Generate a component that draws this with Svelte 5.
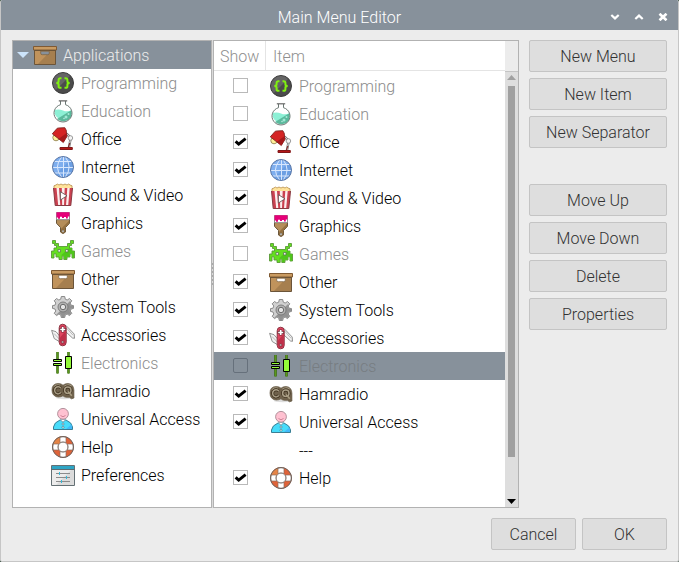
<script>
  const categories = [
    { name: 'Programming', icon: 'code', off: true },
    { name: 'Education', icon: 'flask', off: true },
    { name: 'Office', icon: 'lamp' },
    { name: 'Internet', icon: 'globe' },
    { name: 'Sound & Video', icon: 'popcorn' },
    { name: 'Graphics', icon: 'brush' },
    { name: 'Games', icon: 'invader', off: true },
    { name: 'Other', icon: 'box' },
    { name: 'System Tools', icon: 'gear' },
    { name: 'Accessories', icon: 'knife' },
    { name: 'Electronics', icon: 'parts', off: true },
    { name: 'Hamradio', icon: 'radio' },
    { name: 'Universal Access', icon: 'person' },
  ];
  const help = { name: 'Help', icon: 'buoy' };
  const tree = [...categories, help, { name: 'Preferences', icon: 'prefs' }];
  let items = $state([...categories, { name: '---', separator: true }, help].map((c) => ({ ...c })));
  let selected = $state('Electronics');
  const actions = [
    ['New Menu', 'New Item', 'New Separator'],
    ['Move Up', 'Move Down', 'Delete', 'Properties'],
  ];
</script>

{#snippet icon(name)}
  <svg class="icon" viewBox="0 0 24 24" width="24" height="24" aria-hidden="true">
    {#if name === 'code'}
      <circle cx="12" cy="12" r="10.5" fill="#4b4b4b" stroke="#3c3c3c" />
      <path d="M4.9 4.9A10 10 0 0 1 19 4.9L4.9 19A10 10 0 0 1 4.9 4.9Z" fill="#656565" />
      <path d="M10.5 7.2H9.4Q7.6 7.2 7.6 8.8V10.3Q7.6 12 5.3 12Q7.6 12 7.6 13.7V15.2Q7.6 16.8 9.4 16.8H10.5M13.5 7.2H14.6Q16.4 7.2 16.4 8.8V10.3Q16.4 12 18.7 12Q16.4 12 16.4 13.7V15.2Q16.4 16.8 14.6 16.8H13.5" fill="none" stroke="#80f010" stroke-width="2" />
    {:else if name === 'flask'}
      <path d="M9.5 2V5.7A9 8.8 0 1 0 14.5 5.7V2Z" fill="#fff" />
      <path d="M3.6 11Q8 9.7 12 11.5T20.4 11.3A8.5 8.5 0 1 1 3.6 11Z" fill="#8cf0d5" />
      <path d="M20.3 11.2Q22 17 17.5 20.8Q12 24 6 20Z" fill="#5ab99c" />
      <path d="M9.5 2V5.7A9 8.8 0 1 0 14.5 5.7V2" fill="none" stroke="#6b7773" />
      <path d="M7.8 1.8H16.2" stroke="#666" stroke-width="1.2" />
      <circle cx="15" cy="18" r="1.5" fill="#9fe9d5" /><circle cx="17.5" cy="15" r="1" fill="#a8ebd9" /><circle cx="13" cy="19.5" r=".7" fill="#c7f2e7" />
    {:else if name === 'lamp'}
      <circle cx="5" cy="10.6" r="3.2" fill="#fff09a" stroke="#a09260" />
      <path d="M15.5 6.5L19.8 11L17.8 21" fill="none" stroke="#777" stroke-width="2.4" />
      <path d="M15.5 6.5L19.8 11L17.8 21" fill="none" stroke="#ddd" />
      <circle cx="19.4" cy="11" r="2.3" fill="#f4f4f4" stroke="#888" stroke-width=".8" />
      <path d="M6.3 1.2L9 .9L13.8 .7L15.2 3.2L15.9 9.5L12.3 15.5L1.3 6.8Z" fill="#d42424" stroke="#7d2320" stroke-width=".9" />
      <path d="M15.7 6L15.7 9.5L12.3 15.2L7.8 11.7Z" fill="#a5191b" />
      <path d="M9 20.5H21.3V22.5H9ZM17.5 20L18.8 16" fill="#b51718" stroke="#811818" />
    {:else if name === 'globe'}
      <circle cx="12" cy="12" r="10.5" fill="#7eaeee" />
      <path d="M19 5L5 19Q9 23 14 22Q24 19 22 10Q21 6 19 5Z" fill="#6c9fe3" />
      <path d="M3 6.5H21M1.5 12.5H22.5M3.5 18H20.5M12.5 1.5V22.5M11 1.5Q1.8 12 11 22.5M14 1.5Q22.2 12 14 22.5" fill="none" stroke="#d8e7fd" stroke-width="1" />
      <circle cx="12" cy="12" r="10.5" fill="none" stroke="#5b77a5" />
    {:else if name === 'popcorn'}
      <path d="M3 5Q2 2 5 2Q6 0 8 2Q10 0 12 2Q14 0 16 2Q18 0 19 2Q22 2 21 5V7H3Z" fill="#ffe39a" stroke="#b58e50" stroke-width=".8" />
      <path d="M2.5 5H21.5L19.8 22.5H4.2Z" fill="#fbeeee" />
      <path d="M2.5 5H5.5L7.2 22.5H4.2ZM8 5H10.8L11.2 22.5H9.3ZM13.7 5H16.3L15 22.5H13ZM18.7 5H21.5L19.8 22.5H17.2Z" fill="#cb4150" />
      <path d="M2.5 5L4.2 22.5H19.8L21.5 5" fill="none" stroke="#873b43" />
      <path d="M9.4 8.7V17L16 12.8Z" fill="#fff" stroke="#655" stroke-width=".9" />
    {:else if name === 'brush'}
      <path d="M5.5 8.5V12.3L9.5 16.5V21Q12 24 14.5 21V16.5L18.5 12.3V8.5Z" fill="#b58e5a" stroke="#6b563a" />
      <path d="M14.2 16.3L18.2 12.2V9.5L10 18V21Q12 23.3 14.2 21Z" fill="#94703f" />
      <path d="M5.5 1.5H18.5V8.7H5.5Z" fill="#fff" stroke="#777" stroke-width=".8" />
      <path d="M5.5 1.3H18.5V5.5H16.8V7.5H15V6H13V7H11V5.8H9V7.7H7V6.5H5.5Z" fill="#e60078" />
      <circle cx="12" cy="20.2" r="1.1" fill="#fff" stroke="#615b50" stroke-width=".7" />
    {:else if name === 'invader'}
      <path d="M1.5 1.5H4.5V4.5H7.5V7.5H16.5V4.5H19.5V1.5H22.5V4.5H20.5V6.5H18.5V9H21V12H23.5V19H21V14.8H19V18H16V20.5H12.8V17H11.2V20.5H8V18H5V14.8H3V19H.5V12H3V9H5.5V6.5H3.5V4.5H1.5Z" fill="#64df20" stroke="#5a9838" stroke-width=".9" />
      <path d="M18.2 9H21V12H23V18.5H21.4V14.5H18.5V17.6H15.5V20H13.3V16.6H9.8Z" fill="#4fc51b" />
      <path d="M7 10.5H9.5V13H7ZM14.5 10.5H17V13H14.5Z" fill="#eee" stroke="#5c7c4e" stroke-width=".8" />
    {:else if name === 'box'}
      <path d="M1.5 7H22.5V21.5H1.5Z" fill="#c0935c" stroke="#6b5439" />
      <path d="M22 8V21H5L17.5 8Z" fill="#a67f4f" />
      <path d="M.5 3.5H23.5V7H.5Z" fill="#c99b62" stroke="#805a33" />
      <path d="M1 7.5H23" stroke="#6c5335" />
      <path d="M7.7 8.2H16.3V10.2Q16.3 11.7 14.7 11.7H9.3Q7.7 11.7 7.7 10.2Z" fill="#fff" class="slot" stroke="#7d6545" stroke-width=".8" />
    {:else if name === 'gear'}
      <path d="M10.3 1.5H13.7L14.3 4.2L16.2 5L18.5 3.5L20.8 5.8L19.2 8L20 10.2L22.5 10.6V13.4L20 14L19.2 16L20.8 18.3L18.5 20.6L16.2 19.1L14.3 19.8L13.7 22.5H10.3L9.7 19.8L7.8 19.1L5.5 20.6L3.2 18.3L4.8 16L4 14L1.5 13.4V10.6L4 10.2L4.8 8L3.2 5.8L5.5 3.5L7.8 5L9.7 4.2Z" fill="#d0d0d0" stroke="#808080" stroke-width=".9" />
      <path d="M19.5 5.5L5 20L6 20L8 18.7L10 19.5L10.5 22H13.5L14 19.5L16 18.7L18.5 20L20.3 18.3L18.7 16L19.7 13.8L22 13V11L19.7 10.4L18.8 8Z" fill="#929292" />
      <circle cx="12" cy="12" r="5" fill="#b2b2b2" stroke="#777" stroke-width=".9" /><circle cx="12" cy="12" r="2.7" fill="#e4e4e4" stroke="#6a6a6a" />
    {:else if name === 'knife'}
      <path d="M.6 7.3L5 8.7L9.5 14L9.5 19.3L3.2 15.5ZM13.8 2.3L15.7 3.2L23.2 11L23.5 15.3L21.5 15L14.5 8.6Z" fill="#f2f2f2" stroke="#858585" stroke-width=".9" />
      <path d="M3 10.5L9.3 17M15.5 5L22 12.2" stroke="#bbb" />
      <rect x="8.2" y="1.2" width="7" height="21.6" rx="3.5" fill="#e04560" stroke="#8d3341" />
      <path d="M14.7 8V19.3Q13.5 22.7 10.4 22L9 19V14.5Z" fill="#bf3049" />
      <path d="M11.7 3.4V9.6M8.6 6.5H14.8" stroke="#6b2935" stroke-width="2.8" /><path d="M11.7 4V9M9.2 6.5H14.2" stroke="#fff" stroke-width="1.7" />
      <circle cx="11.7" cy="19" r="1.1" fill="#ddd" stroke="#73404a" stroke-width=".7" />
    {:else if name === 'parts'}
      <path d="M6.5 1V9M6.5 14.5V22.5M17.5 1V5M17.5 18V22.5" stroke="#3c720f" stroke-width="2.6" />
      <path d="M6.5 1V9M6.5 15V22.5M17.5 1V5M17.5 18V22.5" stroke="#5b961c" />
      <path d="M2.5 8.5H10.5V10.5H2.5ZM2.5 12.5H10.5V14.5H2.5ZM14.5 5.5H20.5V17.5H14.5Z" fill="#93fa38" stroke="#000" />
    {:else if name === 'radio'}
      <ellipse cx="14" cy="18.6" rx="9.4" ry="1.7" fill="#777" opacity=".25" />
      <path d="M1 11Q1 4.5 7.3 4.5Q10.2 4.5 12 6.2Q14 4.5 16.8 4.5Q22.8 5 22.9 11.2V19L20.5 19.8L18.4 18.3H15.2Q13 18 12 16.8Q10 18 7.3 18Q1 17.5 1 11Z" fill="#6f614b" stroke="#62553f" stroke-width=".7" />
      <path d="M3 8Q5 5 9 6.2M13.5 7.2Q17 4.4 20.5 7" stroke="#a79c85" stroke-width="1.2" fill="none" />
      <path d="M9.8 9.2A3.4 3.6 0 1 0 9.8 13.4" stroke="#3d301d" stroke-width="3" fill="none" />
      <circle cx="16.8" cy="11.3" r="3.2" fill="none" stroke="#3d301d" stroke-width="3" />
      <path d="M9.8 9.2A3.4 3.6 0 1 0 9.8 13.4" stroke="#a99e87" stroke-width="1.5" fill="none" />
      <circle cx="16.8" cy="11.3" r="3.2" fill="none" stroke="#a99e87" stroke-width="1.5" /><path d="M17 12.5L20.8 16.8" stroke="#a99d82" stroke-width="1.6" />
    {:else if name === 'person'}
      <path d="M2.5 22.5V20Q3 15.5 9 13H15Q21 15.5 21.5 20V22.5Z" fill="#48dcfa" stroke="#397f95" />
      <path d="M20.5 17.5L15 22H21V20Z" fill="#42b9f9" />
      <circle cx="12" cy="6.8" r="5.4" fill="#ffc1d1" stroke="#a98892" stroke-width=".9" />
      <path d="M9.5 8.5Q12 11 14.5 8.5" fill="none" stroke="#cc7c91" stroke-width=".9" />
      <path d="M9.5 13L12 15.2L14.5 13" fill="#fff" stroke="#668b95" stroke-width=".8" />
      <circle cx="12" cy="17" r="1" fill="#fff" stroke="#467" stroke-width=".6" /><circle cx="12" cy="20.3" r="1" fill="#fff" stroke="#467" stroke-width=".6" />
    {:else if name === 'buoy'}
      <circle cx="12" cy="12" r="7.8" fill="none" stroke="#df6339" stroke-width="5.8" />
      <path d="M4.2 12A7.8 7.8 0 0 1 12 4.2" fill="none" stroke="#e58446" stroke-width="5.8" />
      <path d="M9 1.8H15V7.5Q12 6.3 9 7.5ZM9 22.2H15V16.5Q12 17.7 9 16.5ZM1.8 9H7.5Q6.3 12 7.5 15H1.8ZM22.2 9H16.5Q17.7 12 16.5 15H22.2Z" fill="#fff" stroke="#8a6b5c" stroke-width=".7" />
      <circle cx="12" cy="12" r="10.5" fill="none" stroke="#6b6460" /><circle cx="12" cy="12" r="4.9" fill="none" stroke="#888" stroke-width=".9" />
    {:else if name === 'prefs'}
      <path d="M.5 2.5H23.5V22.5H.5Z" fill="#ececec" stroke="#647074" />
      <path d="M22.9 7V22H5L20 7Z" fill="#dbdbdb" />
      <path d="M1 3H23V6H1Z" fill="#2ea5c5" /><path d="M.5 6.5H23.5" stroke="#5d6b70" />
      <path d="M5 10.5H19M5 14.5H19M5 18.5H19" stroke="#8b8b8b" /><path d="M8.5 9V12M15.5 13V16M10.5 17V20" stroke="#35b9d9" />
    {/if}
  </svg>
{/snippet}

<div class="window">
  <header class="titlebar">
    <span class="title">Main Menu Editor</span>
    <div class="controls">
      <svg viewBox="0 0 10 8" width="10" height="8"><path d="M1.3 2L5 5.4L8.7 2" /></svg>
      <svg viewBox="0 0 10 8" width="10" height="8"><path d="M1.3 6L5 2.6L8.7 6" /></svg>
      <svg viewBox="0 0 10 8" width="10" height="8"><path d="M1.5 .7L8.5 7.3M8.5 .7L1.5 7.3" class="close" /></svg>
    </div>
  </header>

  <main>
    <div class="panes">
      <section class="pane tree">
        <div class="row root">
          <svg class="expander" viewBox="0 0 12 6" width="12" height="6"><path d="M0 0H12L6 6Z" fill="#cce4fb" /></svg>
          {@render icon('box')}
          <span class="label">Applications</span>
        </div>
        {#each tree as entry}
          <div class="row child" class:off={entry.off}>
            {@render icon(entry.icon)}
            <span class="label">{entry.name}</span>
          </div>
        {/each}
      </section>

      <div class="grip">{#each Array(6) as _}<i></i>{/each}</div>

      <section class="pane list">
        <div class="content">
          <div class="columns"><span class="show">Show</span><span class="item">Item</span></div>
          {#each items as entry}
            <!-- svelte-ignore a11y_click_events_have_key_events, a11y_no_static_element_interactions -->
            <div class="row" class:off={entry.off} class:selected={entry.name === selected} onclick={() => (selected = entry.name)}>
              {#if entry.separator}
                <span class="label dashes">{entry.name}</span>
              {:else}
                <button class="check" aria-label={entry.name} onclick={() => (entry.off = !entry.off)}>
                  {#if !entry.off}
                    <svg viewBox="0 0 13 13" width="13" height="13"><path d="M1.6 6.4L4.7 9.2L11.6 3.6" /></svg>
                  {/if}
                </button>
                {@render icon(entry.icon)}
                <span class="label">{entry.name}</span>
              {/if}
            </div>
          {/each}
        </div>
        <div class="scrollbar">
          <div class="corner"></div>
          <svg viewBox="0 0 9 5" width="9" height="5"><path d="M0 5H9L4.5 0Z" fill="#a0a0a0" /></svg>
          <div class="thumb"></div>
          <svg viewBox="0 0 9 5" width="9" height="5"><path d="M0 0H9L4.5 5Z" fill="#000" /></svg>
        </div>
      </section>
    </div>

    <aside>
      {#each actions as group}
        <div class="group">
          {#each group as action}<button class="btn">{action}</button>{/each}
        </div>
      {/each}
    </aside>
  </main>

  <footer>
    <button class="btn">Cancel</button>
    <button class="btn">OK</button>
  </footer>
</div>

<style>
  :global(body) { background: #0b2a16; }
  .window {
    box-sizing: border-box;
    width: 679px;
    height: 562px;
    background: #ececec;
    border: 1px solid #c6c6c6;
    border-top: 0;
    border-radius: 2px;
    overflow: hidden;
    font: 300 16px/28px Roboto, sans-serif;
    color: #000;
  }
  .titlebar {
    display: grid;
    grid-template-columns: 1fr;
    align-items: center;
    height: 30px;
    margin: 0 -1px;
    padding-top: 2px;
    box-sizing: border-box;
    background: #87919b;
    color: #fff;
  }
  .title, .controls { grid-area: 1 / 1; }
  .title { text-align: center; padding-top: 2px; letter-spacing: 0.03px; }
  .controls { display: flex; gap: 14px; justify-self: end; padding-right: 11px; }
  .controls path { fill: none; stroke: #fff; stroke-width: 2.2; }
  .controls .close { stroke-width: 2.6; }
  main { display: flex; gap: 10px; padding: 10px 11px 0; }
  .panes { display: flex; width: 507px; height: 468px; }
  .pane { box-sizing: border-box; border: 1px solid #b2b2b2; background: #fff; }
  .tree { width: 200px; }
  .grip { width: 1px; background: #dadada; display: flex; flex-direction: column; justify-content: center; gap: 2px; }
  .grip i { height: 2px; background: #aaa; }
  .list { display: flex; width: 306px; }
  .content { flex: 1; }
  .row { display: flex; align-items: center; height: 28px; }
  .icon { flex: none; display: block; }
  .label { margin-left: 6px; padding-top: 2px; line-height: 26px; white-space: nowrap; }
  .off { color: #8c8c8c; }
  .root { background: #87919b; color: #ececec; }
  .root :global(.slot) { fill: #87919b; }
  .expander { margin: 0 3px 0 4px; }
  .root .icon { margin-left: 1px; }
  .child { padding-left: 38px; }
  .columns { display: flex; height: 30px; box-sizing: border-box; border-bottom: 1px solid #e4e4e4; color: #8f8f8f; line-height: 32px; margin-bottom: 1px; }
  .show { width: 52px; box-sizing: border-box; padding-left: 6px; border-right: 1px solid #e4e4e4; }
  .item { padding-left: 7px; }
  .list .row { padding-left: 19px; }
  .check { box-sizing: border-box; width: 15px; height: 15px; padding: 0; margin: -1px 21px 0 0; flex: none; border: 1px solid #b9b9b9; background: #fff; }
  .check svg { display: block; }
  .check path { fill: none; stroke: #000; stroke-width: 2.9; }
  .dashes { margin-left: 66px; padding-top: 3px; }
  .selected { background: #87919b; color: #777d82; }
  .selected .check { background: transparent; border-color: #66707b; border-radius: 2px; }
  .scrollbar { width: 13px; background: #dedede; display: flex; flex-direction: column; align-items: center; padding-bottom: 3px; }
  .corner { align-self: stretch; height: 30px; background: #ececec; border-bottom: 1px solid #c4c4c4; margin-bottom: 3px; }
  .thumb { width: 7px; flex: none; height: 371px; background: #a0a0a0; margin: 6px 0 auto; }
  aside { display: flex; flex-direction: column; gap: 36px; width: 138px; }
  .group { display: flex; flex-direction: column; gap: 6px; }
  .btn { box-sizing: border-box; height: 32px; padding: 2px 0 0; border: 1px solid #c4c4c4; border-radius: 2px; background: #dedede; color: #323232; font: inherit; }
  footer { display: flex; justify-content: flex-end; gap: 6px; padding: 10px 11px 0 0; }
  footer .btn { width: 85px; }
</style>
